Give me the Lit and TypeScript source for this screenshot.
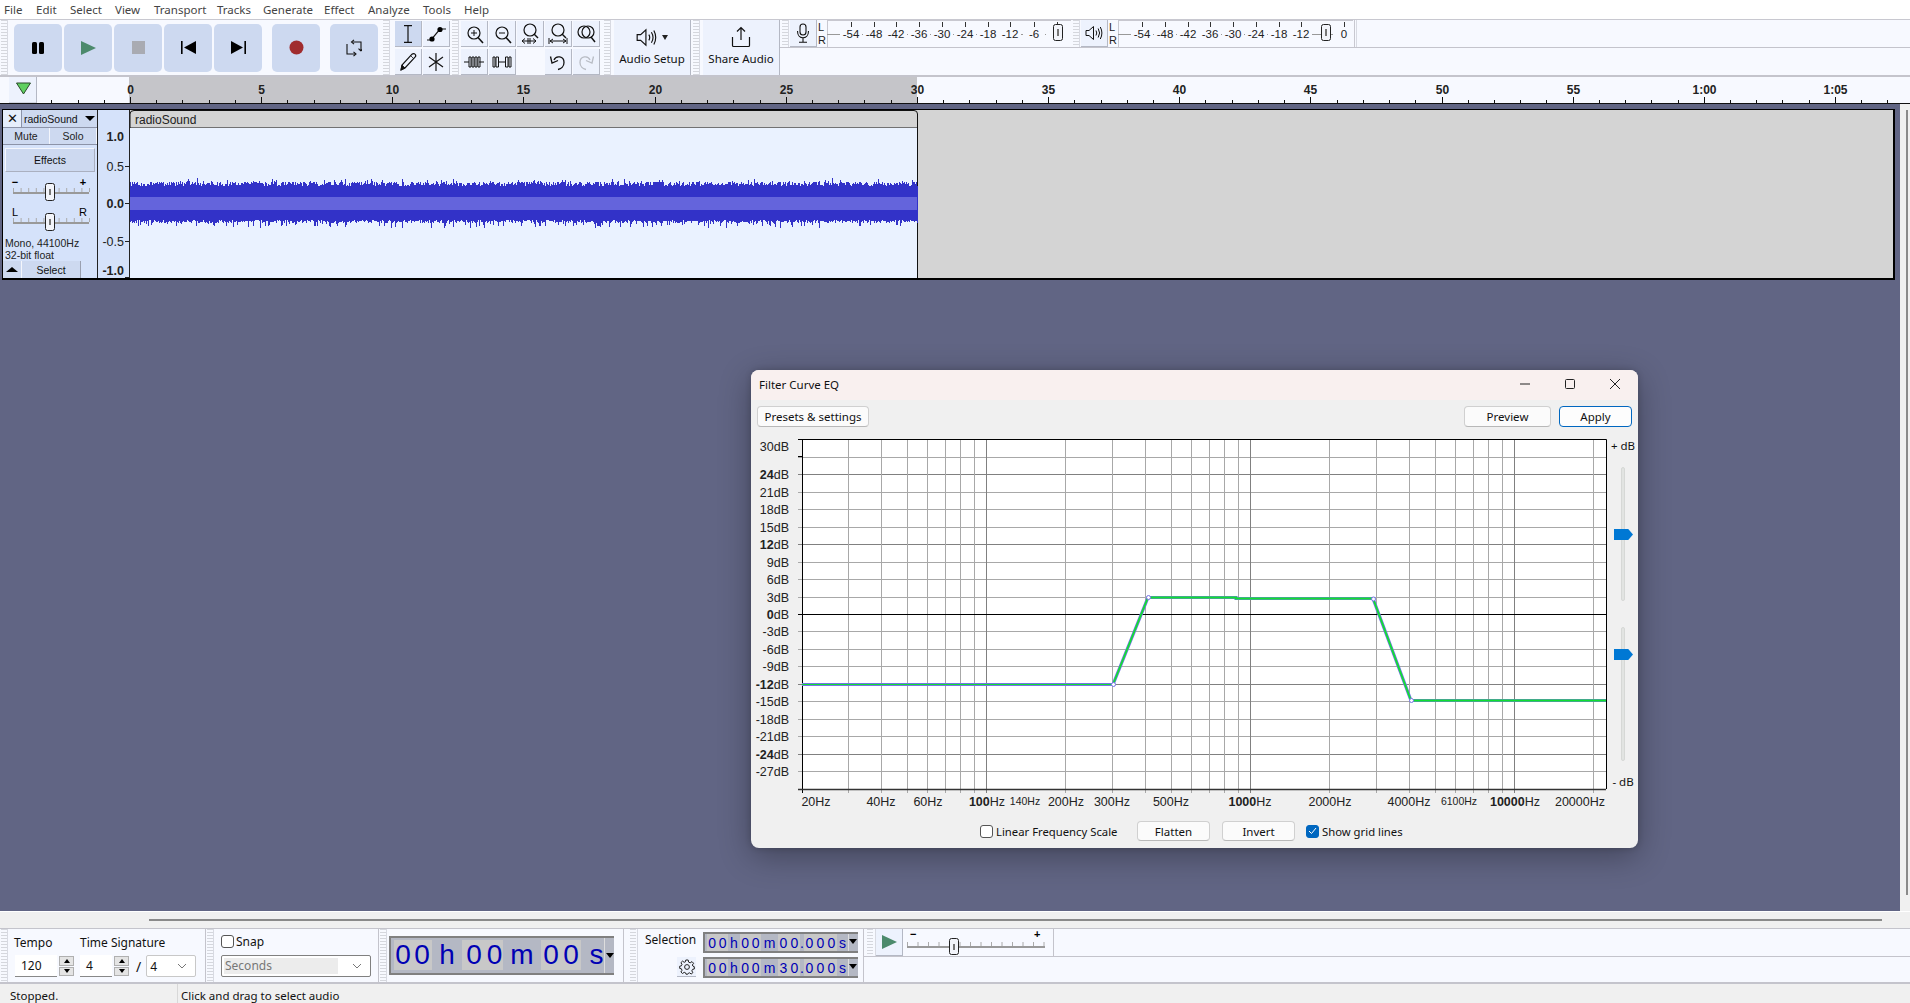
import { LitElement, html, css, svg } from "lit";
import { customElement } from "lit/decorators.js";

const rng = (() => { let s = 4242; return () => { s = (Math.imul(s, 1103515245) + 12345) & 0x7fffffff; return s / 0x7fffffff; }; })();

function wavePath(x0: number, x1: number): string {
  const tops: number[] = [], bots: number[] = [];
  for (let x = x0; x < x1; x++) {
    const u = rng() * 4.5 + (rng() < 0.2 ? rng() * 4 : 0);
    const d = rng() * 3 + (rng() < 0.2 ? rng() * 6 : 0);
    tops.push(Math.round(186 - u));
    bots.push(Math.round(220 + d));
  }
  let p = `M${x0} ${tops[0]}`;
  tops.forEach((t, i) => { p += `V${t}H${x0 + i + 1}`; });
  for (let i = bots.length - 1; i >= 0; i--) { p += `V${bots[i]}H${x0 + i}`; }
  return p + "Z";
}
const WAVE = wavePath(129, 917);

const dbY = (d: number) => Math.round(614 - d * 5.82) + 0.5;
const fX = (f: number) => Math.round(986 + 264 * Math.log10(f / 100)) + 0.5;
const FREQS = [30, 40, 50, 60, 70, 80, 90, 100, 200, 300, 400, 500, 600, 700, 800, 900, 1000, 2000, 3000, 4000, 5000, 6000, 7000, 8000, 9000, 10000, 20000];
const DARKF = [100, 1000, 10000];
const DBS = [27, 24, 21, 18, 15, 12, 9, 6, 3, 0, -3, -6, -9, -12, -15, -18, -21, -24, -27];
const BOLDDB = [24, 12, -12, -24, 0];
const dbLabels: [number, string][] = [[30, "30"], [24, "24"], [21, "21"], [18, "18"], [15, "15"], [12, "12"], [9, "9"], [6, "6"], [3, "3"], [0, "0"], [-3, "-3"], [-6, "-6"], [-9, "-9"], [-12, "-12"], [-15, "-15"], [-18, "-18"], [-21, "-21"], [-24, "-24"], [-27, "-27"]];
const hzLabels: [number, string, string, boolean?][] = [
  [816, "", "20Hz"], [881, "", "40Hz"], [928, "", "60Hz"], [987, "100", "Hz"], [1025, "", "140Hz", true], [1066, "", "200Hz"], [1112, "", "300Hz"], [1171, "", "500Hz"],
  [1250, "1000", "Hz"], [1330, "", "2000Hz"], [1409, "", "4000Hz"], [1459, "", "6100Hz", true], [1515, "10000", "Hz"], [1580, "", "20000Hz"],
];

const ic = (w: number, h: number, body: unknown) => html`<svg width=${w} height=${h} viewBox="0 0 ${w} ${h}">${body}</svg>`;
const magnifier = (extra: unknown) => svg`<circle cx="11" cy="9" r="6" fill="none" stroke="#111" stroke-width="1.2"/><path d="M15 13.5L20 19" stroke="#111" stroke-width="1.6"/>${extra}`;
const speakerBody = svg`<path d="M1 5.5H4L8.5 1.5V14.5L4 10.5H1Z" fill="none" stroke="#111"/><path d="M11 5.5Q12.5 8 11 10.5M13.2 3.5Q16 8 13.2 12.5M15.3 2Q18.5 8 15.3 14" fill="none" stroke="#111"/>`;
const I = {
  pause: ic(14, 14, svg`<rect x="1" y="1" width="5" height="12" rx="1.5"/><rect x="8" y="1" width="5" height="12" rx="1.5"/>`),
  play: ic(16, 14, svg`<path d="M1 0L16 7L1 14Z" fill="#4c8a6c"/>`),
  stop: ic(13, 13, svg`<rect width="13" height="13" fill="#a9abb2"/>`),
  prev: ic(15, 13, svg`<rect x="0" y="0" width="1.6" height="13"/><path d="M15 0V13L3 6.5Z"/>`),
  next: ic(15, 13, svg`<rect x="13.4" y="0" width="1.6" height="13"/><path d="M0 0V13L12 6.5Z"/>`),
  rec: ic(15, 15, svg`<ellipse cx="7.5" cy="7.5" rx="7" ry="7" fill="#a02c2e"/>`),
  loop: ic(16, 18, svg`<path d="M7 3H15V12M15 12L12.5 9.6M15 12L17 9.6M9 15H1V5" fill="none" stroke="#111" stroke-width="1.1"/><path d="M8 .8L5.5 3L8 5.2M7.5 12.8L10 15L7.5 17.2" fill="none" stroke="#111" stroke-width="1.1"/>`),
  ibeam: ic(10, 18, svg`<path d="M1 .7H9M1 17.3H9M5 .7V17.3" fill="none" stroke="#111" stroke-width="1.2"/>`),
  env: ic(20, 16, svg`<path d="M1 14H5L14 3H20" fill="none" stroke="#111" stroke-width="1.2"/><circle cx="6" cy="13" r="2.6"/><circle cx="14" cy="3.5" r="2.6"/>`),
  pencil: ic(18, 20, svg`<path d="M2 18L3 13L13 2.2C14 1.3 15.2 1.3 16 2.2C16.9 3.1 16.9 4.3 16 5.2L6 16Z" fill="none" stroke="#111" stroke-width="1.2"/><path d="M11.6 3.6L14.6 6.6M2 18L3 13L6 16Z" fill="#111" stroke="#111" stroke-width=".8"/>`),
  multi: ic(16, 18, svg`<path d="M8 0V18M1 4L15 14M15 4L1 14" stroke="#111" stroke-width="1.2"/>`),
  zin: ic(22, 20, magnifier(svg`<path d="M8 9H14M11 6V12" stroke="#111"/>`)),
  zout: ic(22, 20, magnifier(svg`<path d="M8 9H14" stroke="#111"/>`)),
  zsel: ic(22, 22, svg`<circle cx="11" cy="7" r="6" fill="none" stroke="#111" stroke-width="1.2"/><path d="M15 11L19 15" stroke="#111" stroke-width="1.4"/><path d="M3 18H17M3 18L6 15.5M3 18L6 20.5M17 18L14 15.5M17 18L14 20.5M9 15V21M11 15V21" fill="none" stroke="#111"/>`),
  zfit: ic(22, 22, svg`<circle cx="11" cy="7" r="6" fill="none" stroke="#111" stroke-width="1.2"/><path d="M15 11L19 15" stroke="#111" stroke-width="1.4"/><path d="M2 15V21M20 15V21M3 18H19M3 18L6 16M3 18L6 20M19 18L16 16M19 18L16 20" fill="none" stroke="#111"/>`),
  ztog: ic(22, 20, svg`<circle cx="9" cy="8" r="6" fill="none" stroke="#111" stroke-width="1.2"/><circle cx="13" cy="8" r="6" fill="none" stroke="#111" stroke-width="1.2"/><path d="M16 13L20 18" stroke="#111" stroke-width="1.5"/>`),
  trim: ic(20, 16, svg`<path d="M0 8H5M15 8H20" stroke="#111"/><path d="M5 3H7V13H5ZM8 3H10V13H8ZM11 3H13V13H11ZM14 3H16V13H14Z" fill="none" stroke="#111"/>`),
  sil: ic(20, 16, svg`<path d="M7 8H13" stroke="#111"/><path d="M1 3H3V13H1ZM4 3H6.5V13H4ZM13.5 3H16V13H13.5ZM17 3H19V13H17Z" fill="none" stroke="#111"/>`),
  undo: ic(18, 18, svg`<path d="M5 7C7 2 15 3 15 9.5C15 13.5 12 16 9 16.5" fill="none" stroke="#111" stroke-width="1.3"/><path d="M1.5 3.5L3 10L9 7.5" fill="none" stroke="#111" stroke-width="1.3"/>`),
  redo: ic(18, 18, svg`<path d="M13 7C11 2 3 3 3 9.5C3 13.5 6 16 9 16.5" fill="none" stroke="#b8bcc4" stroke-width="1.3"/><path d="M16.5 3.5L15 10L9 7.5" fill="none" stroke="#b8bcc4" stroke-width="1.3"/>`),
  speaker: ic(18, 16, speakerBody),
  speakerBig: html`<svg width="21" height="19" viewBox="0 0 18 16">${speakerBody}</svg>`,
  share: ic(20, 22, svg`<path d="M10 1.5V14M6 5.5L10 1.5L14 5.5M1.5 11V19.5C1.5 20 2 20.5 2.5 20.5H17.5C18 20.5 18.5 20 18.5 19.5V11" fill="none" stroke="#111" stroke-width="1.2"/>`),
  mic: ic(14, 20, svg`<rect x="4" y="1" width="6" height="11" rx="3" fill="none" stroke="#111" stroke-width="1.1"/><path d="M1.5 8C1.5 17 12.5 17 12.5 8M7 15V19M3 19.3H11" fill="none" stroke="#111" stroke-width="1.1"/>`),
  gear: ic(16, 16, svg`<circle cx="8" cy="8" r="2.4" fill="none" stroke="#222"/><path d="M6.8 1H9.2L9.6 3.1L11.2 3.8L13 2.6L14.6 4.3L13.3 6L14 7.2L15.3 7.7V10L13.5 10.4L12.8 11.9L13.9 13.6L12.2 15L10.5 13.8L9.2 14.4L8.8 15.2H7L6.6 13.9L5.2 13.3L3.5 14.5L1.9 13L3 11.3L2.4 9.8L.7 9.4V7.2L2.4 6.8L3 5.3L1.9 3.7L3.5 2.1L5.2 3.3L6.4 2.8Z" fill="none" stroke="#222"/>`),
  chev: ic(10, 6, svg`<path d="M1 1L5 5L9 1" fill="none" stroke="#777"/>`),
  check: ic(9, 8, svg`<path d="M1 4L3.5 6.5L8 1" fill="none" stroke="#fff" stroke-width="1"/>`),
};

const MENU: [string, number][] = [["File", 4], ["Edit", 36], ["Select", 70], ["View", 115], ["Transport", 154], ["Tracks", 217], ["Generate", 263], ["Effect", 324], ["Analyze", 368], ["Tools", 423], ["Help", 464], ["", 510]];

@customElement("app-root")
export class AppRoot extends LitElement {
  static styles = css`
    :host { display: flex; flex-direction: column; width: 100%; height: 100vh; min-height: 1003px; overflow: hidden; position: relative; font-family: "Noto Sans", sans-serif; color: #111; background: #616584; }
    .menu { height: 19px; background: #fff; display: flex; align-items: center; font-size: 11.5px; color: #444; flex: none; padding-left: 4px; }
    .menu span { flex: none; }
    .top { height: 55px; flex: none; display: flex; background: #f7f9ff; border-top: 1px solid #c8c8d0; border-bottom: 2px solid #c4c4cc; }
    .grip { width: 8px; flex: none; margin: 0 1px; box-sizing: border-box; background: repeating-linear-gradient(#d5d7dd 0 1px, transparent 1px 3px); background-size: 6px 100%; background-repeat: no-repeat; background-position: center; border-right: 1px solid #d8dae2; }
    .grip.n { margin: 0; }
    .grip.first { margin: 0 1px 0 0; }
    .grip.tfirst { margin: 0 2px 0 0; }
    .grip.selg { margin: 0 0 0 4px; width: 10px; }
    .grip.pbg { margin: 0; width: 12px; }
    .grip.end { background: none; width: 3px; border-left: 1px solid #c8c8d0; }
    .transport { display: flex; align-items: center; padding: 0 3px 0 4px; gap: 2px; }
    .tb { width: 48px; height: 48px; background: #cdd9f0; border-radius: 5px; display: flex; align-items: center; justify-content: center; }
    .tb.gap { margin-left: 8px; }
    .g22 { display: grid; grid-template-columns: repeat(2, 27px); grid-template-rows: 26px 26px; gap: 2px 1px; padding-top: 1px; margin: 0 0 0 4px; }
    .g52 { display: grid; grid-template-columns: repeat(5, 27px); grid-template-rows: 26px 26px; gap: 2px 1px; padding-top: 1px; margin: 0 2px 0 1px; }
    .tool { background: #edf2fd; border-right: 1px solid #b4b8c4; border-bottom: 1px solid #b4b8c4; display: flex; align-items: center; justify-content: center; box-sizing: border-box; }
    .tool.on { background: #cdd9f0; }
    .tool.none { background: #f7f9ff; border: none; }
    .big { background: #edf2fd; border-right: 1px solid #b4b8c4; width: 77px; flex: none; display: flex; flex-direction: column; align-items: center; box-sizing: border-box; font-size: 11.5px; }
    .big.share, .big.setup { margin-left: 2px; }
    .big .i { height: 31px; display: flex; align-items: center; gap: 5px; padding-top: 3px; box-sizing: border-box; }
    .tri { width: 0; height: 0; border-left: 3px solid transparent; border-right: 3px solid transparent; border-top: 5px solid #222; }
    .meters { flex: 1; display: flex; flex-direction: column; min-width: 0; }
    .mrow { height: 27px; border-bottom: 1px solid #c4c4cc; display: flex; flex: none; }
    .mbtn { width: 27px; flex: none; background: #edf2fd; border-right: 1px solid #b4b8c4; border-bottom: 1px solid #b4b8c4; box-sizing: border-box; display: flex; align-items: center; justify-content: center; }
    .mrow svg { display: block; flex: none; }
    .ruler { height: 26px; flex: none; background: #f7f9ff; border-bottom: 1px solid #111; position: relative; }
    .ruler svg { display: block; }
    .stage { flex: 1; display: flex; min-height: 0; }
    .canvas { flex: 1; min-width: 0; background: #616584; padding: 5px 5px 0 2px; }
    .vs { width: 10px; flex: none; background: #f0f0f0; position: relative; }
    .vs i { position: absolute; left: 6px; top: 6px; width: 2px; height: 785px; background: #8a8a8a; }
    .track { height: 171px; box-sizing: border-box; border: 1px solid #000; border-bottom-width: 2px; border-right-width: 2px; display: flex; background: #d4d4d4; }
    .panel { width: 95px; flex: none; background: #d5e2fa; display: flex; flex-direction: column; border-right: 1px solid #222; box-sizing: border-box; font-family: "Liberation Sans", sans-serif; font-size: 10.5px; }
    .panel svg { display: block; flex: none; }
    .prow { display: flex; height: 18px; flex: none; border-bottom: 1px solid #8c93a8; box-sizing: border-box; }
    .prow.ms-row { height: 17px; }
    .x { width: 18px; display: flex; align-items: center; justify-content: center; border-right: 1px solid #8c93a8; font-size: 13px; background: #e6eefc; }
    .nm { flex: 1; background: #cdd9f0; display: flex; align-items: center; justify-content: space-between; padding: 0 2px 0 2px; }
    .arr { width: 0; height: 0; border-left: 5px solid transparent; border-right: 5px solid transparent; border-top: 5px solid #000; }
    .ms { flex: 1; background: #cdd9f0; display: flex; align-items: center; justify-content: center; border-right: 1px solid #f4f6fc; color: #222; }
    .fx { margin: 3px 2px 0 2px; height: 24px; background: #cdd9f0; border: 1px solid #aab0c0; box-sizing: border-box; border-top-color: #f4f6fc; border-left-color: #f4f6fc; display: flex; align-items: center; justify-content: center; flex: none; }
    .sl { margin-top: 5px; flex: none; }
    .info { margin: 5px 0 0 2px; line-height: 12px; height: 24px; color: #222; flex: none; }
    .sel { display: flex; height: 17px; flex: none; }
    .sel .a { width: 18px; background: #cdd9f0; display: flex; align-items: center; justify-content: center; border-right: 1px solid #f4f6fc; }
    .sel .up { width: 0; height: 0; border-left: 6px solid transparent; border-right: 6px solid transparent; border-bottom: 5px solid #000; }
    .sel .b { width: 58px; background: #cdd9f0; display: flex; align-items: center; justify-content: center; border-right: 1px solid #9aa0b0; }
    .vr { width: 32px; flex: none; box-sizing: border-box; background: #d5e2fa; display: block; }
    .clipwrap { display: block; flex: none; }
    .hs { height: 17px; flex: none; background: #f0f0f0; border-top: 1px solid #fff; box-sizing: border-box; display: flex; align-items: center; padding: 0 28px 0 149px; }
    .hs i { flex: 1; height: 2px; background: #8a8a8a; }
    .bottom { height: 56px; flex: none; box-sizing: border-box; display: flex; background: #f7f9ff; border-top: 1px solid #c4c4cc; border-bottom: 2px solid #c4c4cc; }
    .sec { flex: none; box-sizing: border-box; border-right: 1px solid #c4c4cc; position: relative; }
    .tempo { width: 197px; padding: 4px 0 0 5px; font-size: 12px; }
    .labels { display: flex; height: 18px; align-items: center; }
    .labels span:first-child { width: 66px; }
    .fields { display: flex; align-items: center; margin-top: 4px; margin-left: 1px; }
    .inp { height: 22px; box-sizing: border-box; background: #fff; border-bottom: 1px solid #888; display: flex; align-items: center; font-size: 12px; padding-left: 6px; }
    .inp.w1 { width: 42px; }
    .inp.w2 { width: 32px; }
    .spin { width: 15px; height: 20px; margin: 0 6px 0 2px; display: flex; flex-direction: column; gap: 1px; flex: none; }
    .spin b { flex: 1; background: #e4e4e4; border: 1px solid #b0b0b0; display: flex; align-items: center; justify-content: center; box-sizing: border-box; }
    .spin .u { width: 0; height: 0; border-left: 3px solid transparent; border-right: 3px solid transparent; border-bottom: 4px solid #000; }
    .spin .d { width: 0; height: 0; border-left: 3px solid transparent; border-right: 3px solid transparent; border-top: 4px solid #000; }
    .slash { margin: 0 5px 0 1px; font-size: 14px; }
    .drop { height: 22px; box-sizing: border-box; border: 1px solid #c8c8c8; border-radius: 2px; background: #fff; display: flex; align-items: center; justify-content: space-between; padding: 0 8px 0 3px; font-size: 12px; }
    .drop.w { width: 50px; }
    .snap { width: 165px; padding: 5px 0 0 7px; font-size: 12px; }
    .snap .row { display: flex; align-items: center; gap: 2px; height: 14px; }
    .cb { width: 13px; height: 13px; box-sizing: border-box; border: 1px solid #555; border-radius: 3px; background: #fff; display: flex; align-items: center; justify-content: center; flex: none; }
    .cb.on { background: #0067c0; border-color: #0067c0; }
    .snap .drop { width: 150px; margin-top: 7px; border-color: #808080; color: #777; padding-left: 2px; }
    .snap .drop span { background: #ececec; flex: 1; margin-right: 14px; padding-left: 1px; line-height: 16px; }
    .time { width: 237px; display: flex; align-items: flex-start; padding: 7px 0 0 2px; }
    .dig { display: flex; height: 39px; box-sizing: border-box; border: 2px solid #808080; border-right: none; background: #b4b8c4; color: #0000b4; font-family: "Liberation Sans", sans-serif; padding-left: 3px; }
    .dig span { display: flex; align-items: center; justify-content: center; font-size: 28px; height: 30px; margin-top: 2px; box-sizing: border-box; }
    .dig span.l { background: #c8c8c8; }
    .dig em { width: 9px; background: #b4b8c4; font-style: normal; position: relative; border-left: 1px solid #ddd; }
    .dig em::after { content: ""; position: absolute; left: 1px; top: 15px; border-left: 4px solid transparent; border-right: 4px solid transparent; border-top: 5px solid #000; }
    .selsec { width: 226px; padding: 3px 0 0 7px; display: grid; grid-template-columns: 58px 155px; grid-template-rows: 21px 21px; row-gap: 4px; font-size: 12px; }
    .sellab { line-height: 15px; }
    .seltime { display: flex; box-sizing: border-box; height: 21px; border: 2px solid #808080; border-right: none; background: #b4b8c4; color: #0000b4; padding-left: 2px; font-family: "Liberation Sans", sans-serif; width: 155px; }
    .seltime span { display: flex; align-items: center; justify-content: center; font-size: 14px; }
    .seltime span.l { background: #c8c8c8; }
    .seltime em { flex: 1; position: relative; border-left: 1px solid #ddd; background: #b4b8c4; }
    .seltime em::after { content: ""; position: absolute; left: 0; top: 5px; border-left: 4px solid transparent; border-right: 4px solid transparent; border-top: 5px solid #000; }
    .gear { width: 19px; height: 19px; background: #edf2fd; border-bottom: 1px solid #b4b8c4; display: flex; align-items: center; justify-content: center; justify-self: end; margin-right: 7px; }
    .rest { flex: 1; display: flex; flex-direction: column; min-width: 0; }
    .rest .r1 { height: 27px; display: flex; border-bottom: 1px solid #c4c4cc; flex: none; }
    .rest .pb { width: 27px; flex: none; background: #edf2fd; border-right: 1px solid #b4b8c4; border-bottom: 1px solid #b4b8c4; box-sizing: border-box; display: flex; align-items: center; justify-content: center; }
    .rest svg.sp { flex: none; display: block; border-right: 1px solid #c4c4cc; }
    .status { height: 19px; flex: none; overflow: hidden; background: #f0f0f0; display: flex; font-size: 11.5px; color: #111; box-sizing: border-box; }
    .status div { height: 19px; box-sizing: border-box; padding-top: 4px; line-height: 15px; }
    .status .s1 { width: 178px; padding-left: 10px; border-right: 1px solid #d8d8d8; flex: none; }
    .status .s2 { padding-left: 3px; }
    .dlg { position: absolute; left: 751px; top: 370px; width: 887px; height: 478px; border-radius: 8px; background: #f0f0f0; box-shadow: 0 8px 32px rgba(0,0,0,.32), 0 0 6px rgba(0,0,0,.18); overflow: hidden; display: flex; flex-direction: column; font-size: 11.5px; }
    .dtitle { height: 30px; flex: none; box-sizing: border-box; padding: 0 18px 2px 8px; background: #f9f0ef; display: flex; align-items: center; justify-content: space-between; }
    .wbtns { display: flex; gap: 35px; align-items: center; }
    .wbtns svg { display: block; }
    .dtop { height: 21px; margin-top: 6px; flex: none; display: flex; padding: 0 6px; align-items: stretch; }
    .btn { background: #fbfbfb; border: 1px solid #d0d0d0; border-bottom-color: #b8b8b8; border-radius: 4px; display: flex; align-items: center; justify-content: center; box-sizing: border-box; font-size: 11.5px; }
    .btn.pri { border: 1.5px solid #0067c0; background: #fdfdfd; width: 73px; }
    .btn.preset { width: 112px; }
    .btn.prev { width: 87px; margin-right: 8px; }
    .btn.low { width: 73px; height: 20px; }
    .btn.low.inv { margin: 0 11px 0 12px; }
    .fill { flex: 1; }
    .chartrow { display: flex; height: 380px; margin-top: 5px; flex: none; }
    .chartrow svg { display: block; flex: none; }
    .side { width: 30px; flex: none; display: flex; flex-direction: column; align-items: center; font-size: 11.5px; }
    .lab { height: 14px; line-height: 14px; margin-top: 7px; white-space: nowrap; }
    .lab.minus { margin-top: 14px; }
    .slid { width: 4px; background: #e2e4e2; border: 1px solid #d6d8d6; border-radius: 2px; box-sizing: border-box; position: relative; height: 134px; flex: none; margin-top: 14px; }
    .slid.two { margin-top: 26px; }
    .slid i { position: absolute; left: -8px; top: 61px; width: 19px; height: 11px; background: #0078d4; clip-path: polygon(0 0, 75% 0, 100% 50%, 75% 100%, 0 100%); }
    .slid.two i { top: 21px; }
    .dbot { display: flex; align-items: center; height: 20px; margin-top: 9px; padding-left: 229px; flex: none; font-size: 11.3px; }
    .dbot .t { margin-left: 3px; }
    .dbot .t.lin { width: 141px; }
  `;

  private meter(x0: number, x1: number, marks: [number, string][], thumb: number) {
    return html`<svg width=${x1 - x0} height="27" viewBox="${x0} 20 ${x1 - x0} 27">
      <path d="M${x0} 20.5H${x1}" stroke="#c8c8d0"/>
      <path d="M${x0 + 0.5} 20V47" stroke="#c8c8d0"/>
      <path d="M${x0} 34.5H${x1 - 6}" stroke="#999"/>
      ${marks.map(([x, l]) => svg`<path d="M${x + 0.5} 22V27" stroke="#333"/><rect x=${x - 11} y="28" width="22" height="12" fill="#f7f9ff"/><text x=${x} y="38" text-anchor="middle" font-family="Liberation Sans" font-size="11.5" fill="#222">${l}</text>`)}
      <rect x=${thumb - 4.5} y="24.5" width="9" height="16" rx="2" fill="#f2f4fa" stroke="#222"/>
      <path d="M${thumb} 29V36" stroke="#777" stroke-width="2"/>
    </svg>`;
  }

  private lr() {
    return html`<svg width="10" height="27" viewBox="0 0 10 27"><text x="1" y="11" font-family="Liberation Sans" font-size="11" fill="#222">L</text><text x="1" y="24" font-family="Liberation Sans" font-size="11" fill="#222">R</text></svg>`;
  }

  private ruler() {
    const t: unknown[] = [];
    for (let s = -3; s <= 68; s++) {
      const x = Math.round(130 + s * 26.23) + 0.5;
      const major = s >= 0 && s % 5 === 0;
      t.push(svg`<path d="M${x} ${major ? 97 : 100}V103" stroke="#111"/>`);
      if (major) {
        const lbl = s < 60 ? String(s) : `1:${String(s - 60).padStart(2, "0")}`;
        t.push(svg`<text x=${x} y="94" text-anchor="middle" font-family="Liberation Sans" font-weight="700" font-size="12" fill="#222">${lbl}</text>`);
      }
    }
    return html`<div class="ruler"><svg width="1910" height="26" viewBox="0 77 1910 26">
      <rect x="129" y="77" width="788" height="26" fill="#c5c5c9"/>
      <rect x="9" y="77" width="27" height="26" fill="#edf2fd"/><path d="M36.5 77V103H9" fill="none" stroke="#b4b8c4"/>
      <path d="M16.5 83H30.5L23.5 94Z" fill="#60d060" stroke="#2b4a2b"/>
      ${t}
    </svg></div>`;
  }

  private slider(l: string, r: string, bold: boolean) {
    const ticks = [];
    for (let i = 0; i <= 10; i++) ticks.push(svg`<path d="M${10.5 + i * 7.6} 11V15" stroke="#aaa"/>`);
    const w = bold ? 700 : 400;
    return html`<svg class="sl" width="94" height="25" viewBox="0 0 94 25">
      <text x="12" y="9" text-anchor="middle" font-family="Liberation Sans" font-size="11" font-weight=${w}>${l}</text>
      <text x="80" y="9" text-anchor="middle" font-family="Liberation Sans" font-size="11" font-weight=${w}>${r}</text>
      ${ticks}
      <rect x="10" y="15" width="76" height="2" fill="#999"/>
      <rect x="42.5" y="6.5" width="9" height="17" rx="2" fill="#f2f4fa" stroke="#222"/>
      <path d="M47 12V18" stroke="#777" stroke-width="2"/>
    </svg>`;
  }

  private chart() {
    const curve = "M802 684.5H1113L1148 597.5H1236V598.5H1373L1411 700.5H1606";
    return html`<svg width="857" height="380" viewBox="751 432 857 380">
      <rect x="802" y="439" width="804" height="350" fill="#fff"/>
      ${DBS.map(d => d === 0 ? "" : svg`<path d="M798 ${dbY(d)}H1606" stroke=${BOLDDB.includes(d) ? "#808080" : "#a8a8a8"}/>`)}
      ${FREQS.map(f => svg`<path d="M${fX(f)} 439V793" stroke=${DARKF.includes(f) ? "#808080" : "#a8a8a8"}/>`)}
      <path d="M798 ${dbY(0)}H1606" stroke="#000"/>
      <path d="M798 439.5H1606.5V789M802.5 439V793" fill="none" stroke="#000"/>
      <path d="M798 789.5H1606" stroke="#333" stroke-width="1.4"/>
      <path d="M798 456.5H802" stroke="#000"/>
      ${dbLabels.map(([d, l]) => {
        const b = BOLDDB.includes(d);
        return svg`<text x="789" y=${(d === 30 ? 451 : dbY(d) + 4.3)} text-anchor="end" font-family="Liberation Sans" font-size="12.5" fill="#222"><tspan font-weight=${b ? 700 : 400}>${l}</tspan>dB</text>`;
      })}
      ${hzLabels.map(([x, b, t, small]) => svg`<text x=${x} y=${small ? 805 : 806} text-anchor="middle" font-family="Liberation Sans" font-size=${small ? 10.5 : 12.5} fill="#222">${b ? svg`<tspan font-weight="700">${b}</tspan>` : ""}${t}</text>`)}
      <path d=${curve} fill="none" stroke="#7474e4" stroke-width="3.2"/>
      <path d="M802 684.5H1113" fill="none" stroke="#10e030" stroke-width="1"/>
      <path d="M1113 684.5L1148 597.5H1236V598.5H1373L1411 700.5H1606" fill="none" stroke="#10e030" stroke-width="1.8"/>
      ${[[1113.5, 684.5], [1148.5, 597.5], [1373.5, 599], [1411.5, 700.5]].map(([x, y]) => svg`<rect x=${x - 2} y=${y - 2} width="4" height="4" rx="2" fill="#fff" stroke="#7474e4"/>`)}
    </svg>`;
  }

  render() {
    const mic: [number, string][] = [[852, "-54"], [875, "-48"], [897, "-42"], [920, "-36"], [943, "-30"], [966, "-24"], [989, "-18"], [1011, "-12"], [1035, "-6"], [1058, "0"]];
    const spk: [number, string][] = [[1143, "-54"], [1166, "-48"], [1189, "-42"], [1211, "-36"], [1234, "-30"], [1257, "-24"], [1280, "-18"], [1302, "-12"], [1345, "0"]];
    const sel1: [string, boolean, number][] = [["0", true, 10.5], ["0", true, 10.5], ["h", false, 12], ["0", true, 10.5], ["0", true, 10.5], ["m", false, 17], ["0", true, 11], ["0", true, 11], [".", false, 4], ["0", true, 11], ["0", true, 11], ["0", true, 11], ["s", false, 11]];
    const sel2: [string, boolean, number][] = sel1.map((c, i) => (i === 6 ? ["3", true, 11] : c) as [string, boolean, number]);
    const seltime = (cells: [string, boolean, number][]) => html`<div class="seltime">${cells.map(([c, l, w]) => html`<span class=${l ? "l" : ""} style="width:${w}px">${c}</span>`)}<em></em></div>`;
    const bigCells: [string, boolean, number, number][] = [["0", true, 18, 0], ["0", true, 20, 0], ["h", false, 30, 0], ["0", true, 24, 0], ["0", true, 17, 0], ["m", false, 38, 0], ["0", true, 20, 0], ["0", true, 20, 0], ["s", false, 23, 8]];
    return html`
      <div class="menu">${MENU.slice(0, -1).map(([t, x], i) => html`<span style="width:${MENU[i + 1][1] - x}px">${t}</span>`)}</div>
      <div class="top">
        <div class="grip tfirst"></div>
        <div class="transport">
          <div class="tb">${I.pause}</div><div class="tb">${I.play}</div><div class="tb">${I.stop}</div><div class="tb">${I.prev}</div><div class="tb">${I.next}</div>
          <div class="tb gap">${I.rec}</div><div class="tb gap">${I.loop}</div>
        </div>
        <div class="grip"></div>
        <div class="g22">
          <div class="tool on">${I.ibeam}</div><div class="tool">${I.env}</div><div class="tool">${I.pencil}</div><div class="tool">${I.multi}</div>
        </div>
        <div class="grip"></div>
        <div class="g52">
          <div class="tool">${I.zin}</div><div class="tool">${I.zout}</div><div class="tool">${I.zsel}</div><div class="tool">${I.zfit}</div><div class="tool">${I.ztog}</div>
          <div class="tool">${I.trim}</div><div class="tool">${I.sil}</div><div class="tool none"></div><div class="tool">${I.undo}</div><div class="tool">${I.redo}</div>
        </div>
        <div class="grip"></div>
        <div class="big setup"><div class="i">${I.speakerBig}<span class="tri"></span></div><span>Audio Setup</span></div>
        <div class="grip"></div>
        <div class="big share"><div class="i">${I.share}</div><span>Share Audio</span></div>
        <div class="meters">
          <div class="mrow">
            <div class="grip"></div><div class="mbtn">${I.mic}</div>${this.lr()}${this.meter(828, 1072, mic, 1059)}
            <div class="grip"></div><div class="mbtn">${I.speaker}</div>${this.lr()}${this.meter(1119, 1354, spk, 1327)}
            <div class="grip end"></div>
          </div>
        </div>
      </div>
      ${this.ruler()}
      <div class="stage">
        <div class="canvas">
          <div class="track">
            <div class="panel">
              <div class="prow"><div class="x">✕</div><div class="nm"><span>radioSound</span><span class="arr"></span></div></div>
              <div class="prow ms-row"><div class="ms">Mute</div><div class="ms">Solo</div></div>
              <div class="fx">Effects</div>
              ${this.slider("−", "+", true)}
              ${this.slider("L", "R", false)}
              <div class="info">Mono, 44100Hz<br />32-bit float</div>
              <div class="sel"><div class="a"><span class="up"></span></div><div class="b">Select</div></div>
            </div>
            <svg class="vr" width="32" height="168" viewBox="97 110 32 168">
              ${([["1.0", 140.5, true], ["0.5", 170.5, false], ["0.0", 207.5, true], ["-0.5", 245.5, false], ["-1.0", 274.5, true]] as [string, number, boolean][]).map(([l, y, b]) => svg`<text x="123" y=${y} text-anchor="end" font-family="Liberation Sans" font-size="12.5" font-weight=${b ? 700 : 400} fill="#222">${l}</text>`)}
              ${[166.5, 203.5, 241.5].map(y => svg`<path d="M124 ${y}H129" stroke="#222"/>`)}
              <path d="M124 277.5H129M128.5 110V278" stroke="#222"/>
            </svg>
            <svg class="clipwrap" width="788" height="168" viewBox="129 110 788 168">
              <path d="M129 128V114Q129 110.5 133 110.5H913Q916.5 110.5 916.5 114V128Z" fill="#d4d4d4" stroke="#111"/>
              <rect x="129" y="128" width="788" height="150" fill="#eaf2ff"/>
              <path d="M916.5 128V278" stroke="#111"/>
              <text x="134" y="124" font-family="Liberation Sans" font-size="12" fill="#222">radioSound</text>
              <path d=${WAVE} fill="#3232c8"/>
              <rect x="129" y="197" width="787" height="13" fill="#6464dc"/>
            </svg>
          </div>
        </div>
        <div class="vs"><i></i></div>
      </div>
      <div class="hs"><i></i></div>
      <div class="bottom">
        <div class="grip first"></div>
        <div class="sec tempo">
          <div class="labels"><span>Tempo</span><span>Time Signature</span></div>
          <div class="fields">
            <div class="inp w1">120</div>
            <div class="spin"><b><i class="u"></i></b><b><i class="d"></i></b></div>
            <div class="inp w2">4</div>
            <div class="spin"><b><i class="u"></i></b><b><i class="d"></i></b></div>
            <span class="slash">/</span>
            <div class="drop w"><span>4</span>${I.chev}</div>
          </div>
        </div>
        <div class="grip n"></div>
        <div class="sec snap">
          <div class="row"><span class="cb"></span><span>Snap</span></div>
          <div class="drop"><span>Seconds</span>${I.chev}</div>
        </div>
        <div class="grip n"></div>
        <div class="sec time">
          <div class="dig">${bigCells.map(([c, l, w, p]) => html`<span class=${l ? "l" : ""} style="width:${w}px;padding-left:${p}px">${c}</span>`)}<em></em></div>
        </div>
        <div class="grip selg"></div>
        <div class="sec selsec">
          <div class="sellab">Selection</div>${seltime(sel1)}
          <div class="gear">${I.gear}</div>${seltime(sel2)}
        </div>
        <div class="rest">
          <div class="r1">
            <div class="grip pbg"></div>
            <div class="pb">${I.play}</div>
            <svg class="sp" width="150" height="27" viewBox="0 0 150 27">
              <text x="7" y="9" font-family="Liberation Sans" font-size="11" font-weight="700">−</text>
              <text x="131" y="9" font-family="Liberation Sans" font-size="11" font-weight="700">+</text>
              ${Array.from({ length: 14 }, (_, i) => svg`<path d="M${4.5 + i * 10.5} 13V17" stroke="#aaa"/>`)}
              <rect x="4" y="17" width="138" height="2" fill="#999"/>
              <rect x="46.5" y="9.5" width="9" height="16" rx="2" fill="#f2f4fa" stroke="#222"/>
              <path d="M51 15V21" stroke="#777" stroke-width="2"/>
            </svg>
          </div>
        </div>
      </div>
      <div class="status"><div class="s1">Stopped.</div><div class="s2">Click and drag to select audio</div></div>

      <div class="dlg">
        <div class="dtitle"><span>Filter Curve EQ</span>
          <div class="wbtns">
            <svg width="10" height="10" viewBox="0 0 10 10"><path d="M0 5H10" stroke="#222"/></svg>
            <svg width="10" height="10" viewBox="0 0 10 10"><rect x=".5" y=".5" width="9" height="9" rx="1" fill="none" stroke="#222"/></svg>
            <svg width="10" height="10" viewBox="0 0 10 10"><path d="M0 0L10 10M10 0L0 10" stroke="#222"/></svg>
          </div>
        </div>
        <div class="dtop">
          <div class="btn preset">Presets &amp; settings</div>
          <div class="fill"></div>
          <div class="btn prev">Preview</div>
          <div class="btn pri">Apply</div>
        </div>
        <div class="chartrow">
          ${this.chart()}
          <div class="side">
            <div class="lab">+ dB</div>
            <div class="slid"><i></i></div>
            <div class="slid two"><i></i></div>
            <div class="lab minus">- dB</div>
          </div>
        </div>
        <div class="dbot">
          <span class="cb"></span><span class="t lin">Linear Frequency Scale</span>
          <div class="btn low">Flatten</div>
          <div class="btn low inv">Invert</div>
          <span class="cb on">${I.check}</span><span class="t">Show grid lines</span>
        </div>
      </div>
    `;
  }
}
